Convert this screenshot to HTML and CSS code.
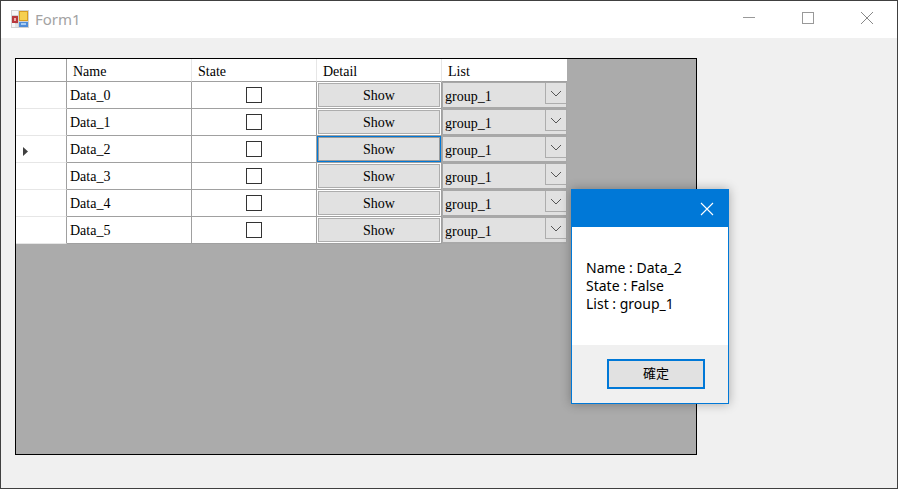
FILE: index.html
```html
<!DOCTYPE html>
<html lang="zh-Hant">
<head>
<meta charset="utf-8">
<title>Form1</title>
<link rel="stylesheet" href="styles.css">
</head>
<body>
<div class="window">
  <header class="titlebar">
    <svg class="app-icon" width="18" height="18" viewBox="0 0 18 18">
      <rect width="18" height="18" fill="#d2d2d2"/>
      <rect x="1" y="1" width="6" height="4" fill="#f6f6f6"/>
      <rect x="1" y="13" width="3" height="4" fill="#f6f6f6"/>
      <rect x="4" y="14" width="3" height="3" fill="#e4e4e4"/>
      <rect x="1" y="6" width="6" height="7" fill="#b8383c"/>
      <rect x="3" y="8" width="2" height="3" fill="#eeb0a8"/>
      <rect x="8" y="1" width="9" height="10" fill="#d89c20"/>
      <rect x="9" y="2" width="7" height="8" fill="#f6d050"/>
      <rect x="8" y="12" width="9" height="5" fill="#4f8cd8"/>
      <rect x="10" y="13" width="5" height="2" fill="#a8ccf0"/>
    </svg>
    <span class="title">Form1</span>
    <div class="controls">
      <svg width="14" height="14" viewBox="0 0 14 14"><path d="M1 5.5H13" stroke="#999" fill="none"/></svg>
      <svg width="14" height="14" viewBox="0 0 14 14"><rect x="1.5" y="0.5" width="11" height="11" stroke="#999" fill="none"/></svg>
      <svg width="14" height="14" viewBox="0 0 14 14"><path d="M1 0L13 12M13 0L1 12" stroke="#888" fill="none"/></svg>
    </div>
  </header>
  <main class="client">
    <div class="grid-view">
      <div class="table">
        <div class="hc corner"></div>
        <div class="hc">Name</div>
        <div class="hc">State</div>
        <div class="hc">Detail</div>
        <div class="hc last">List</div>

        <div class="rh"></div>
        <div class="c name">Data_0</div>
        <div class="c check"><span class="box"></span></div>
        <div class="c btn-cell"><span class="btn">Show</span></div>
        <div class="combo"><span class="val">group_1</span><span class="arrow"><svg width="12" height="7" viewBox="0 0 12 7"><path d="M1 1L6 6L11 1" stroke="#555" fill="none"/></svg></span></div>

        <div class="rh"></div>
        <div class="c name">Data_1</div>
        <div class="c check"><span class="box"></span></div>
        <div class="c btn-cell"><span class="btn">Show</span></div>
        <div class="combo"><span class="val">group_1</span><span class="arrow"><svg width="12" height="7" viewBox="0 0 12 7"><path d="M1 1L6 6L11 1" stroke="#555" fill="none"/></svg></span></div>

        <div class="rh current"><svg width="5" height="9" viewBox="0 0 5 9"><path d="M0 0L5 4.5L0 9Z" fill="#404040"/></svg></div>
        <div class="c name">Data_2</div>
        <div class="c check"><span class="box"></span></div>
        <div class="c btn-cell focus"><span class="btn">Show</span></div>
        <div class="combo"><span class="val">group_1</span><span class="arrow"><svg width="12" height="7" viewBox="0 0 12 7"><path d="M1 1L6 6L11 1" stroke="#555" fill="none"/></svg></span></div>

        <div class="rh"></div>
        <div class="c name">Data_3</div>
        <div class="c check"><span class="box"></span></div>
        <div class="c btn-cell"><span class="btn">Show</span></div>
        <div class="combo"><span class="val">group_1</span><span class="arrow"><svg width="12" height="7" viewBox="0 0 12 7"><path d="M1 1L6 6L11 1" stroke="#555" fill="none"/></svg></span></div>

        <div class="rh"></div>
        <div class="c name">Data_4</div>
        <div class="c check"><span class="box"></span></div>
        <div class="c btn-cell"><span class="btn">Show</span></div>
        <div class="combo"><span class="val">group_1</span><span class="arrow"><svg width="12" height="7" viewBox="0 0 12 7"><path d="M1 1L6 6L11 1" stroke="#555" fill="none"/></svg></span></div>

        <div class="rh"></div>
        <div class="c name">Data_5</div>
        <div class="c check"><span class="box"></span></div>
        <div class="c btn-cell"><span class="btn">Show</span></div>
        <div class="combo"><span class="val">group_1</span><span class="arrow"><svg width="12" height="7" viewBox="0 0 12 7"><path d="M1 1L6 6L11 1" stroke="#555" fill="none"/></svg></span></div>
      </div>
    </div>
  </main>
  <section class="dialog">
    <div class="dialog-title">
      <svg width="14" height="14" viewBox="0 0 14 14"><path d="M1 1L13 13M13 1L1 13" stroke="#fff" stroke-width="1.1" fill="none"/></svg>
    </div>
    <div class="dialog-body">
      <p>Name : Data_2</p>
      <p>State : False</p>
      <p>List : group_1</p>
    </div>
    <div class="dialog-foot"><span class="ok">確定</span></div>
  </section>
</div>
</body>
</html>
```
FILE: styles.css
```css
* { box-sizing: border-box; }
html, body { margin: 0; height: 100%; overflow: hidden; }
body { background: #fff; }
.window {
  position: relative;
  width: 898px;
  height: 489px;
  border: 1px solid #404040;
  display: flex;
  flex-direction: column;
}
.titlebar {
  height: 37px;
  flex: none;
  background: #fff;
  display: flex;
  align-items: center;
  padding: 0 0 2px 10px;
}
.app-icon { flex: none; }
.title {
  margin-left: 6px;
  font: 15px "Noto Sans", sans-serif;
  color: #a3a3a3;
}
.controls {
  margin-left: auto;
  display: flex;
  gap: 45px;
  padding-right: 23px;
}
.controls svg { display: block; }
.client {
  flex: 1;
  background: #f0f0f0;
  padding: 20px 0 0 14px;
}
.grid-view {
  width: 682px;
  height: 397px;
  border: 1px solid #000;
  background: #ababab;
}
.table {
  display: grid;
  grid-template-columns: 51px 125px 125px 125px 125px;
  grid-template-rows: 23px repeat(6, 27px);
  font: 14px "Liberation Serif", serif;
  color: #000;
}
.hc {
  background: #fff;
  border-right: 1px solid #e6e6e6;
  border-bottom: 1px solid #a0a0a0;
  padding: 4px 0 0 6px;
  line-height: 18px;
}
.hc.corner { border-right-color: #a0a0a0; }
.hc.last { border-right: 0; }
.rh {
  background: #fff;
  border-right: 1px solid #a0a0a0;
  border-bottom: 1px solid #e6e6e6;
  display: flex;
  align-items: center;
  padding-left: 7px;
}
.rh svg { display: block; margin-top: 4px; }
.rh:last-of-type { border-bottom-color: #a0a0a0; }
.c {
  background: #fff;
  border-right: 1px solid #a0a0a0;
  border-bottom: 1px solid #a0a0a0;
}
.name { padding: 5px 0 0 3px; line-height: 18px; }
.check { display: flex; justify-content: center; align-items: center; padding-bottom: 1px; }
.box {
  width: 16px;
  height: 16px;
  border: 1px solid #333;
  background: #fff;
}
.btn-cell { padding: 1px; }
.btn {
  display: block;
  height: 24px;
  background: #e1e1e1;
  border: 1px solid #adadad;
  padding-top: 2px;
  text-align: center;
  line-height: 20px;
}
.focus { padding: 0; }
.focus .btn {
  height: 26px;
  border: 1px solid #0078d7;
  box-shadow: inset 0 0 0 1px #9a9a9a;
  padding-top: 3px;
}
.combo {
  background: #e1e1e1;
  border: 1px solid #a8a8a8;
  border-width: 1px 1px 2px 1px;
  display: flex;
  justify-content: space-between;
  align-items: flex-start;
}
.val { padding: 5px 0 0 2px; line-height: 18px; }
.arrow {
  width: 21px;
  height: 21px;
  border-left: 1px solid #adadad;
  border-bottom: 1px solid #adadad;
  display: flex;
  align-items: center;
  justify-content: center;
}
.arrow svg { display: block; }
.dialog {
  position: absolute;
  left: 570px;
  top: 188px;
  width: 158px;
  height: 215px;
  border: 1px solid #0078d7;
  background: #fff;
  box-shadow: 0 0 10px rgba(0, 0, 0, 0.3);
  display: flex;
  flex-direction: column;
}
.dialog-title {
  height: 37px;
  flex: none;
  background: #0078d7;
  display: flex;
  justify-content: flex-end;
  align-items: center;
  padding-right: 14px;
}
.dialog-title svg { display: block; }
.dialog-body {
  height: 118px;
  flex: none;
  padding: 32px 0 0 14px;
  font: 14px/18px "Noto Sans", sans-serif;
  color: #000;
}
.dialog-body p { margin: 0; }
.dialog-foot {
  flex: 1;
  background: #f0f0f0;
  padding: 14px 0 0 35px;
}
.ok {
  display: block;
  width: 98px;
  height: 30px;
  border: 2px solid #0078d7;
  background: #e1e1e1;
  text-align: center;
  font: 13px/24px "Noto Sans CJK TC", sans-serif;
  color: #000;
}
```
